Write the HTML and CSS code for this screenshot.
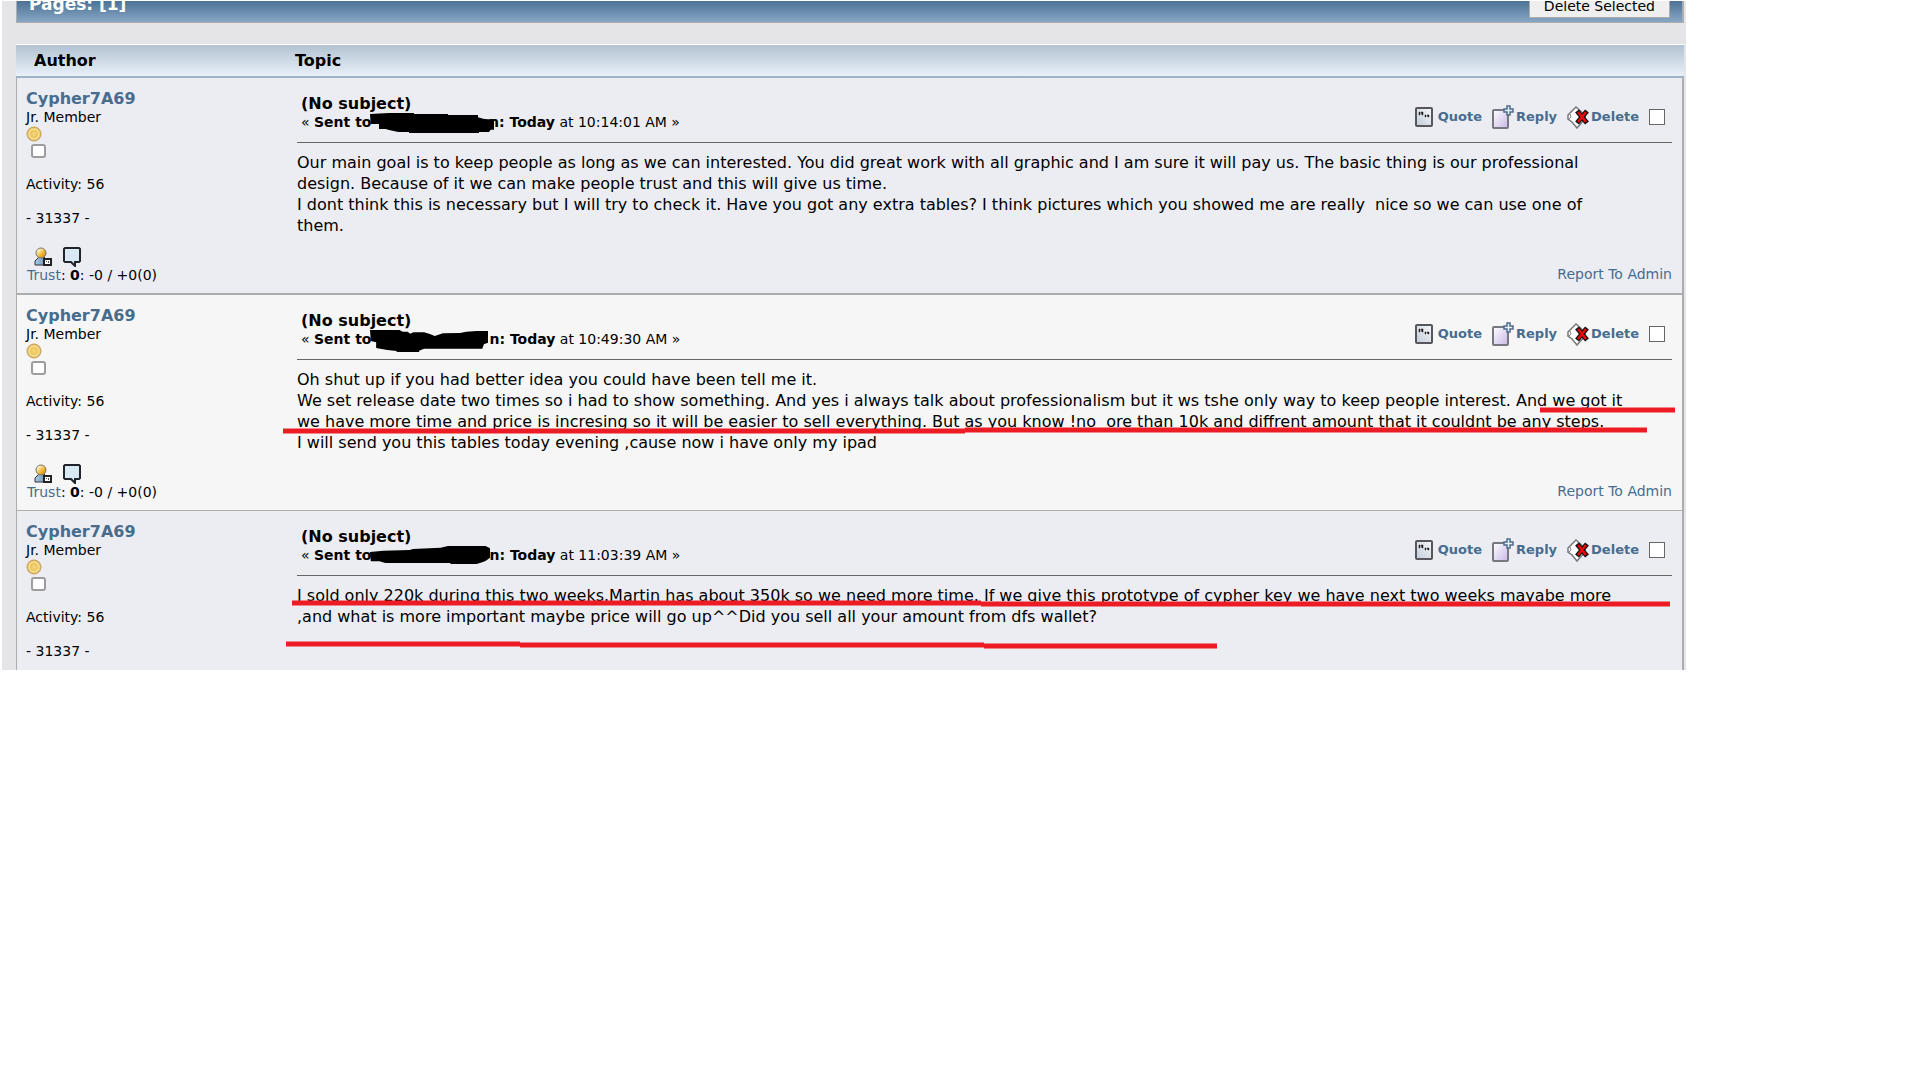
FILE: index.html
```html
<!DOCTYPE html>
<html lang="en">
<head>
  <meta charset="UTF-8">
  <meta name="viewport" content="width=device-width, initial-scale=1.0">
  <title>Personal Messages</title>
  <link rel="stylesheet" href="styles.css">
</head>
<body>

  <!-- Shared icons -->
  <svg class="icon-defs" aria-hidden="true">
    <defs>
      <linearGradient id="paper" x1="1" y1="0" x2="0" y2="1">
        <stop offset="0" stop-color="#f6f8fb"/>
        <stop offset="1" stop-color="#c3ccd9"/>
      </linearGradient>
      <linearGradient id="lilac" x1="0" y1="0" x2="1" y2="1">
        <stop offset="0" stop-color="#ffffff"/>
        <stop offset="1" stop-color="#c9b8e6"/>
      </linearGradient>
      <radialGradient id="gold">
        <stop offset="0" stop-color="#f6da80"/>
        <stop offset="0.5" stop-color="#eac45c"/>
        <stop offset="0.7" stop-color="#f8e29a"/>
        <stop offset="1" stop-color="#d4a848"/>
      </radialGradient>
      <linearGradient id="face" x1="0" y1="0" x2="1" y2="1">
        <stop offset="0.2" stop-color="#fff3d0"/>
        <stop offset="0.6" stop-color="#f0b429"/>
        <stop offset="1" stop-color="#b87a10"/>
      </linearGradient>
      <linearGradient id="shirt" x1="0" y1="0" x2="1" y2="0">
        <stop offset="0" stop-color="#a9cbe8"/>
        <stop offset="1" stop-color="#5f86ad"/>
      </linearGradient>
    </defs>
    <symbol id="icon-quote" viewBox="0 0 18 20">
      <rect x="1" y="1" width="16" height="18" rx="1" fill="url(#paper)" stroke="#55575c" stroke-width="2"/>
      <path d="M4 5h1v3h-1zM6 5h2v3h-1zM10 8h1v2h-1zM12 8h2v2h-1z" fill="#222" stroke="#222" stroke-width="0.5"/>
    </symbol>
    <symbol id="icon-reply" viewBox="0 0 22 24">
      <rect x="1" y="5" width="15" height="18" rx="1" fill="url(#lilac)" stroke="#77787f" stroke-width="2"/>
      <path d="M15 1h3v3h3v3h-3v3h-3v-3h-3v-3h3z" fill="#e6eff7" stroke="#4d6c8c" stroke-width="1.5"/>
    </symbol>
    <symbol id="icon-delete" viewBox="0 0 22 24">
      <path d="M1 10L9 2L18 10V14L10 23L5 17L1 14z" fill="#fff" stroke="#77777b" stroke-width="1.5"/>
      <path d="M3 9L4 12L2 14" fill="none" stroke="#88888c"/>
      <path d="M10 6L20 18M20 6L10 18" stroke="#111" stroke-width="5"/>
      <path d="M11 7L19 17M19 7L11 17" stroke="#f00808" stroke-width="2.5"/>
    </symbol>
    <symbol id="icon-profile" viewBox="0 0 18 20">
      <path d="M1 18V14L5 10H10L14 14V18z" fill="url(#shirt)" stroke="#333" stroke-width="1"/>
      <circle cx="7" cy="6" r="5" fill="url(#face)" stroke="#77736a" stroke-width="1"/>
      <path d="M10 12H17V18H10z" fill="#fff" stroke="#222" stroke-width="2"/>
      <path d="M12 14h1v1h-1zM14 14h1v2h-1z" fill="#555"/>
    </symbol>
    <symbol id="icon-bubble" viewBox="0 0 18 20">
      <path d="M2 1H16L17 2V14L16 15H12V19L8 15H2L1 14V2z" fill="#d9e8f5" stroke="#20252b" stroke-width="2"/>
    </symbol>
    <symbol id="icon-coin" viewBox="0 0 16 16">
      <circle cx="8" cy="8" r="7" fill="url(#gold)" stroke="#c9a150" stroke-width="1"/>
    </symbol>
  </svg>

  <div class="page">
    <div class="page-bar">
      <span class="pages">Pages: [1]</span>
      <button class="delete-selected" type="button">Delete Selected</button>
    </div>

    <table class="messages">
      <thead>
        <tr>
          <th class="author">Author</th>
          <th class="topic">Topic</th>
        </tr>
      </thead>
      <tbody>
        <!-- Message 1 -->
        <tr class="row row-alt">
          <td class="author">
            <a class="name" href="#">Cypher7A69</a>
            <div>Jr. Member</div>
            <svg class="coin"><use href="#icon-coin"/></svg>
            <span class="offline"></span>
            <div class="info">Activity: 56</div>
            <div class="info">- 31337 -</div>
            <div class="contact">
              <a href="#" aria-label="Profile"><svg><use href="#icon-profile"/></svg></a>
              <a href="#" aria-label="Message"><svg><use href="#icon-bubble"/></svg></a>
            </div>
            <div class="trust"><a href="#">Trust</a>: <b>0</b>: -0 / +0(0)</div>
          </td>
          <td class="topic">
            <div class="post-head">
              <div>
                <div class="subject">(No subject)</div>
                <div class="sent">« <b>Sent to<span class="name-gap gap-wide"><svg width="124" height="20" viewBox="273 105 372 60"><path d="M273 108L330 105H405V108H507V111H597V118L618 124H645V155H635L630 162H600V165H390V162H358L330 156L320 153H300V138H275z"/></svg></span>on: Today</b> at 10:14:01 AM »</div>
              </div>
              <div class="actions">
                <a class="quote" href="#"><svg><use href="#icon-quote"/></svg>Quote</a>
                <a class="reply" href="#"><svg><use href="#icon-reply"/></svg>Reply</a>
                <a class="delete" href="#"><svg><use href="#icon-delete"/></svg>Delete</a>
                <input type="checkbox" aria-label="Select message 1">
              </div>
            </div>
            <div class="message">Our main goal is to keep people as long as we can interested. You did great work with all graphic and I am sure it will pay us. The basic thing is our professional<br>design. Because of it we can make people trust and this will give us time.<br>I dont think this is necessary but I will try to check it. Have you got any extra tables? I think pictures which you showed me are really&nbsp; nice so we can use one of<br>them.</div>
            <a class="report" href="#">Report To Admin</a>
          </td>
        </tr>

        <!-- Message 2 -->
        <tr class="row">
          <td class="author">
            <a class="name" href="#">Cypher7A69</a>
            <div>Jr. Member</div>
            <svg class="coin"><use href="#icon-coin"/></svg>
            <span class="offline"></span>
            <div class="info">Activity: 56</div>
            <div class="info">- 31337 -</div>
            <div class="contact">
              <a href="#" aria-label="Profile"><svg><use href="#icon-profile"/></svg></a>
              <a href="#" aria-label="Message"><svg><use href="#icon-bubble"/></svg></a>
            </div>
            <div class="trust"><a href="#">Trust</a>: <b>0</b>: -0 / +0(0)</div>
          </td>
          <td class="topic">
            <div class="post-head">
              <div>
                <div class="subject">(No subject)</div>
                <div class="sent">« <b>Sent to<span class="name-gap"><svg width="118" height="22" viewBox="220 87 288 66" preserveAspectRatio="none"><path d="M220 87H292L300 92H312L318 98L326 94H352L366 99L378 105L398 97L440 96L455 92L480 90H508V125L498 130L494 143H352L340 149V153H285V150L262 147L235 141V124L222 120z"/></svg></span>n: Today</b> at 10:49:30 AM »</div>
              </div>
              <div class="actions">
                <a class="quote" href="#"><svg><use href="#icon-quote"/></svg>Quote</a>
                <a class="reply" href="#"><svg><use href="#icon-reply"/></svg>Reply</a>
                <a class="delete" href="#"><svg><use href="#icon-delete"/></svg>Delete</a>
                <input type="checkbox" aria-label="Select message 2">
              </div>
            </div>
            <div class="message">Oh shut up if you had better idea you could have been tell me it.<br>We set release date two times so i had to show something. And yes i always talk about professionalism but it ws tshe only way to keep people interest. And we got it<br>we have more time and price is incresing so it will be easier to sell everything. But as you know !no&nbsp; ore than 10k and diffrent amount that it couldnt be any steps.<br>I will send you this tables today evening ,cause now i have only my ipad
              <svg class="marker"><path d="M1243 41H1378M-14 62H668M668 61H1350"/></svg>
            </div>
            <a class="report" href="#">Report To Admin</a>
          </td>
        </tr>

        <!-- Message 3 -->
        <tr class="row row-alt">
          <td class="author">
            <a class="name" href="#">Cypher7A69</a>
            <div>Jr. Member</div>
            <svg class="coin"><use href="#icon-coin"/></svg>
            <span class="offline"></span>
            <div class="info">Activity: 56</div>
            <div class="info">- 31337 -</div>
          </td>
          <td class="topic">
            <div class="post-head">
              <div>
                <div class="subject">(No subject)</div>
                <div class="sent">« <b>Sent to<span class="name-gap"><svg width="120" height="18" viewBox="217 108 294 54" preserveAspectRatio="none"><path d="M217 126L250 122L315 120L322 117L390 113L408 108H500L511 115V143L500 153L492 157L478 162H414V159H255L240 154H219z"/></svg></span>n: Today</b> at 11:03:39 AM »</div>
              </div>
              <div class="actions">
                <a class="quote" href="#"><svg><use href="#icon-quote"/></svg>Quote</a>
                <a class="reply" href="#"><svg><use href="#icon-reply"/></svg>Reply</a>
                <a class="delete" href="#"><svg><use href="#icon-delete"/></svg>Delete</a>
                <input type="checkbox" aria-label="Select message 3">
              </div>
            </div>
            <div class="message message-last">I sold only 220k during this two weeks.Martin has about 350k so we need more time. If we give this prototype of cypher key we have next two weeks mayabe more<br>,and what is more important maybe price will go up^^Did you sell all your amount from dfs wallet?
              <svg class="marker"><path d="M-5 18H684M684 19H1373M-11 59H223M223 60H687M687 61H920"/></svg>
            </div>
          </td>
        </tr>
      </tbody>
    </table>
  </div>

</body>
</html>
```
FILE: styles.css
```css
body {
  margin: 0;
  padding: 1px 234px 0 2px;
  background-color: white;
  color: black;
  font-family: Verdana, "DejaVu Sans", sans-serif;
  font-size: 14px;
}

a {
  color: #476c8e;
  text-decoration: none;
}

.icon-defs {
  position: absolute;
  width: 0;
  height: 0;
}

.page {
  position: relative;
  padding: 0 2px 0 14px;
  background-color: #e5e5e8;
}

/* Part of the author column that hangs below the page */
.page::after {
  content: "";
  position: absolute;
  left: 14px;
  bottom: -3px;
  width: 235px;
  height: 3px;
  background-color: #ecedf3;
}

/* Pages bar */
.page-bar {
  display: flex;
  justify-content: space-between;
  align-items: flex-end;
  height: 21px;
  padding: 0 12px;
  overflow: hidden;
  background: linear-gradient(#4b7295, #88a6c4);
  border: 1px solid #adadad;
  border-width: 0 2px 1px 1px;
}

.pages {
  color: white;
  font-size: 17px;
  font-weight: bold;
  line-height: 20px;
  padding-bottom: 8px;
}

.delete-selected {
  flex: none;
  height: 24px;
  margin-bottom: 4px;
  padding: 0 14px;
  background-color: #efefef;
  border: 1px solid #adadad;
  font-family: Verdana, "DejaVu Sans", sans-serif;
  font-size: 14px;
}

/* Messages */
.messages {
  width: 100%;
  margin-top: 21px;
  border-collapse: separate;
  border-spacing: 0;
}

th {
  height: 31px;
  padding: 0;
  background: linear-gradient(#b2c2d1, #e9f1f9);
  border-top: 1px solid white;
  border-bottom: 2px solid #9fb2c3;
  font-size: 16px;
  text-align: left;
}

th.author {
  width: 261px;
  padding-left: 18px;
}

td {
  padding: 0;
  vertical-align: top;
  background-color: #f6f6f6;
  border-bottom: 1px solid #adadad;
}

.row-alt td {
  background-color: #ecedf3;
  border-bottom-width: 2px;
}

.row:last-child td {
  height: 134px;
  border-bottom: none;
}

td.author {
  padding: 11px 0 9px 9px;
  border-left: 1px solid #adadad;
  line-height: 17px;
}

td.topic {
  padding: 16px 10px 9px 2px;
  border-right: 2px solid #adadad;
}

.name {
  display: block;
  font-size: 16px;
  font-weight: bold;
  line-height: 20px;
}

.coin {
  display: block;
  width: 16px;
  height: 16px;
}

.offline {
  display: block;
  box-sizing: border-box;
  width: 15px;
  height: 14px;
  margin: 2px 0 1px 5px;
  background-color: white;
  border: 2px solid #9d9d9d;
  border-radius: 3px;
}

.info {
  padding-top: 17px;
}

.contact {
  display: flex;
  gap: 11px;
  height: 20px;
  padding: 20px 0 0 8px;
}

.contact svg {
  display: block;
  width: 18px;
  height: 20px;
}

.trust {
  padding-left: 1px;
}

.post-head {
  display: flex;
  justify-content: space-between;
  align-items: flex-start;
  height: 48px;
  border-bottom: 1px solid #666;
  white-space: nowrap;
}

.subject {
  padding-left: 4px;
  font-size: 16px;
  font-weight: bold;
  line-height: 19px;
}

.sent {
  padding-left: 4px;
  line-height: 19px;
}

.name-gap {
  position: relative;
  display: inline-block;
  width: 118px;
}

.gap-wide {
  width: 108px;
}

/* Blacked out user name */
.name-gap svg {
  position: absolute;
  left: -1px;
  top: -14px;
}

.actions {
  display: flex;
  align-items: center;
  gap: 10px;
  padding: 11px 7px 0 0;
}

.actions a {
  display: flex;
  align-items: center;
  font-size: 13px;
  font-weight: bold;
  line-height: 24px;
}

.actions svg {
  width: 22px;
  height: 24px;
  margin-right: 2px;
}

.actions .quote svg {
  width: 18px;
  height: 20px;
  margin-right: 5px;
}

.actions input {
  appearance: none;
  box-sizing: border-box;
  width: 16px;
  height: 16px;
  margin: 0;
  background-color: white;
  border: 1px solid #666;
}

.message {
  position: relative;
  min-height: 84px;
  padding: 9px 0 30px;
  font-size: 16px;
  line-height: 21px;
  white-space: nowrap;
}

.message-last {
  min-height: 0;
  padding-bottom: 0;
}

/* Red pen lines over the text */
.marker {
  position: absolute;
  left: 0;
  top: 9px;
  width: 1px;
  height: 1px;
  overflow: visible;
  fill: none;
  stroke: #ed1c24;
  stroke-width: 5px;
}

.report {
  display: block;
  line-height: 17px;
  text-align: right;
}
```
